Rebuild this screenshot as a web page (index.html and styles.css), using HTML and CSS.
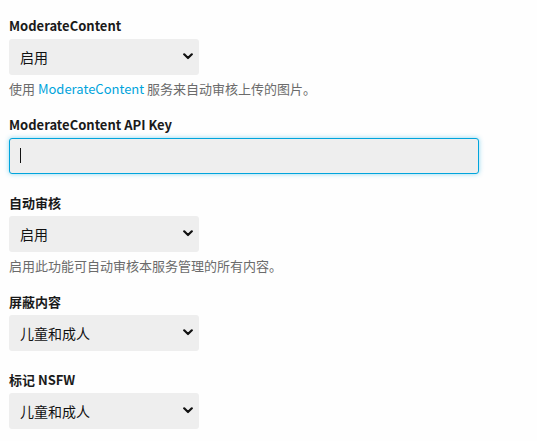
FILE: index.html
```html
<!DOCTYPE html>
<html lang="zh-CN">
<head>
<meta charset="utf-8">
<title>ModerateContent</title>
<link rel="stylesheet" href="styles.css">
</head>
<body>
<form class="config">
  <div class="field field-help">
    <label class="label" for="mc">ModerateContent</label>
    <div class="select-wrap">
      <select id="mc" class="select"><option>启用</option><option>禁用</option></select>
      <svg class="chevron" width="10" height="7" viewBox="0 0 10 7"><path d="M1.2 1.3 L5 5 L8.8 1.3" fill="none" stroke="#111" stroke-width="2.2" stroke-linecap="round" stroke-linejoin="round"/></svg>
    </div>
    <div class="help">使用 <a class="link" href="#">ModerateContent</a> 服务来自动审核上传的图片。</div>
  </div>

  <div class="field field-plain">
    <label class="label" for="key">ModerateContent API Key</label>
    <div class="input-wrap">
      <input id="key" class="input" type="text" value="">
      <span class="caret"></span>
    </div>
  </div>

  <div class="field field-help">
    <label class="label" for="auto">自动审核</label>
    <div class="select-wrap">
      <select id="auto" class="select"><option>启用</option><option>禁用</option></select>
      <svg class="chevron" width="10" height="7" viewBox="0 0 10 7"><path d="M1.2 1.3 L5 5 L8.8 1.3" fill="none" stroke="#111" stroke-width="2.2" stroke-linecap="round" stroke-linejoin="round"/></svg>
    </div>
    <div class="help">启用此功能可自动审核本服务管理的所有内容。</div>
  </div>

  <div class="field field-plain">
    <label class="label" for="block">屏蔽内容</label>
    <div class="select-wrap">
      <select id="block" class="select"><option>儿童和成人</option></select>
      <svg class="chevron" width="10" height="7" viewBox="0 0 10 7"><path d="M1.2 1.3 L5 5 L8.8 1.3" fill="none" stroke="#111" stroke-width="2.2" stroke-linecap="round" stroke-linejoin="round"/></svg>
    </div>
  </div>

  <div class="field field-plain">
    <label class="label" for="nsfw">标记 NSFW</label>
    <div class="select-wrap">
      <select id="nsfw" class="select"><option>儿童和成人</option></select>
      <svg class="chevron" width="10" height="7" viewBox="0 0 10 7"><path d="M1.2 1.3 L5 5 L8.8 1.3" fill="none" stroke="#111" stroke-width="2.2" stroke-linecap="round" stroke-linejoin="round"/></svg>
    </div>
  </div>
</form>
</body>
</html>
```

FILE: styles.css
```css
html, body {
  margin: 0;
  background: #fefefe;
}
body {
  font-family: "Noto Sans CJK SC", "Noto Sans", sans-serif;
  color: #1c1c1c;
  overflow: hidden;
}
.config {
  display: flex;
  flex-direction: column;
  padding: 17px 9px 0 9px;
}
.field {
  display: flex;
  flex-direction: column;
  align-items: flex-start;
}
.field-help {
  margin-bottom: 17.5px;
}
.field-plain {
  margin-bottom: 20.5px;
}
.label {
  font-size: 13px;
  font-weight: bold;
  line-height: 18px;
  margin-bottom: 4px;
  color: #1a1a1a;
}
.select-wrap {
  position: relative;
  width: 190px;
  height: 36px;
}
.select {
  appearance: none;
  -webkit-appearance: none;
  width: 100%;
  height: 36px;
  margin: 0;
  border: none;
  border-radius: 3px;
  background: #eeeeee;
  padding: 0 0 0 11px;
  font-family: "Noto Sans CJK SC", "Noto Sans", sans-serif;
  font-size: 14px;
  color: #111;
  outline: none;
}
.chevron {
  position: absolute;
  right: 6px;
  top: 14px;
  pointer-events: none;
}
.help {
  margin-top: 5px;
  font-size: 13px;
  line-height: 18px;
  color: #6b6b6b;
}
.link {
  color: #00a4dc;
  text-decoration: none;
}
.input-wrap {
  position: relative;
  width: 470px;
  height: 36px;
}
.input {
  box-sizing: border-box;
  width: 100%;
  height: 36px;
  margin: 0;
  border: 1px solid #00a4dc;
  border-radius: 3px;
  background: #eeeeee;
  box-shadow: 0 0 5px rgba(0, 164, 220, 0.45);
  padding: 0 11px;
  font-size: 14px;
  outline: none;
}
.caret {
  position: absolute;
  left: 11px;
  top: 10px;
  width: 1px;
  height: 15px;
  background: #111;
}
```
